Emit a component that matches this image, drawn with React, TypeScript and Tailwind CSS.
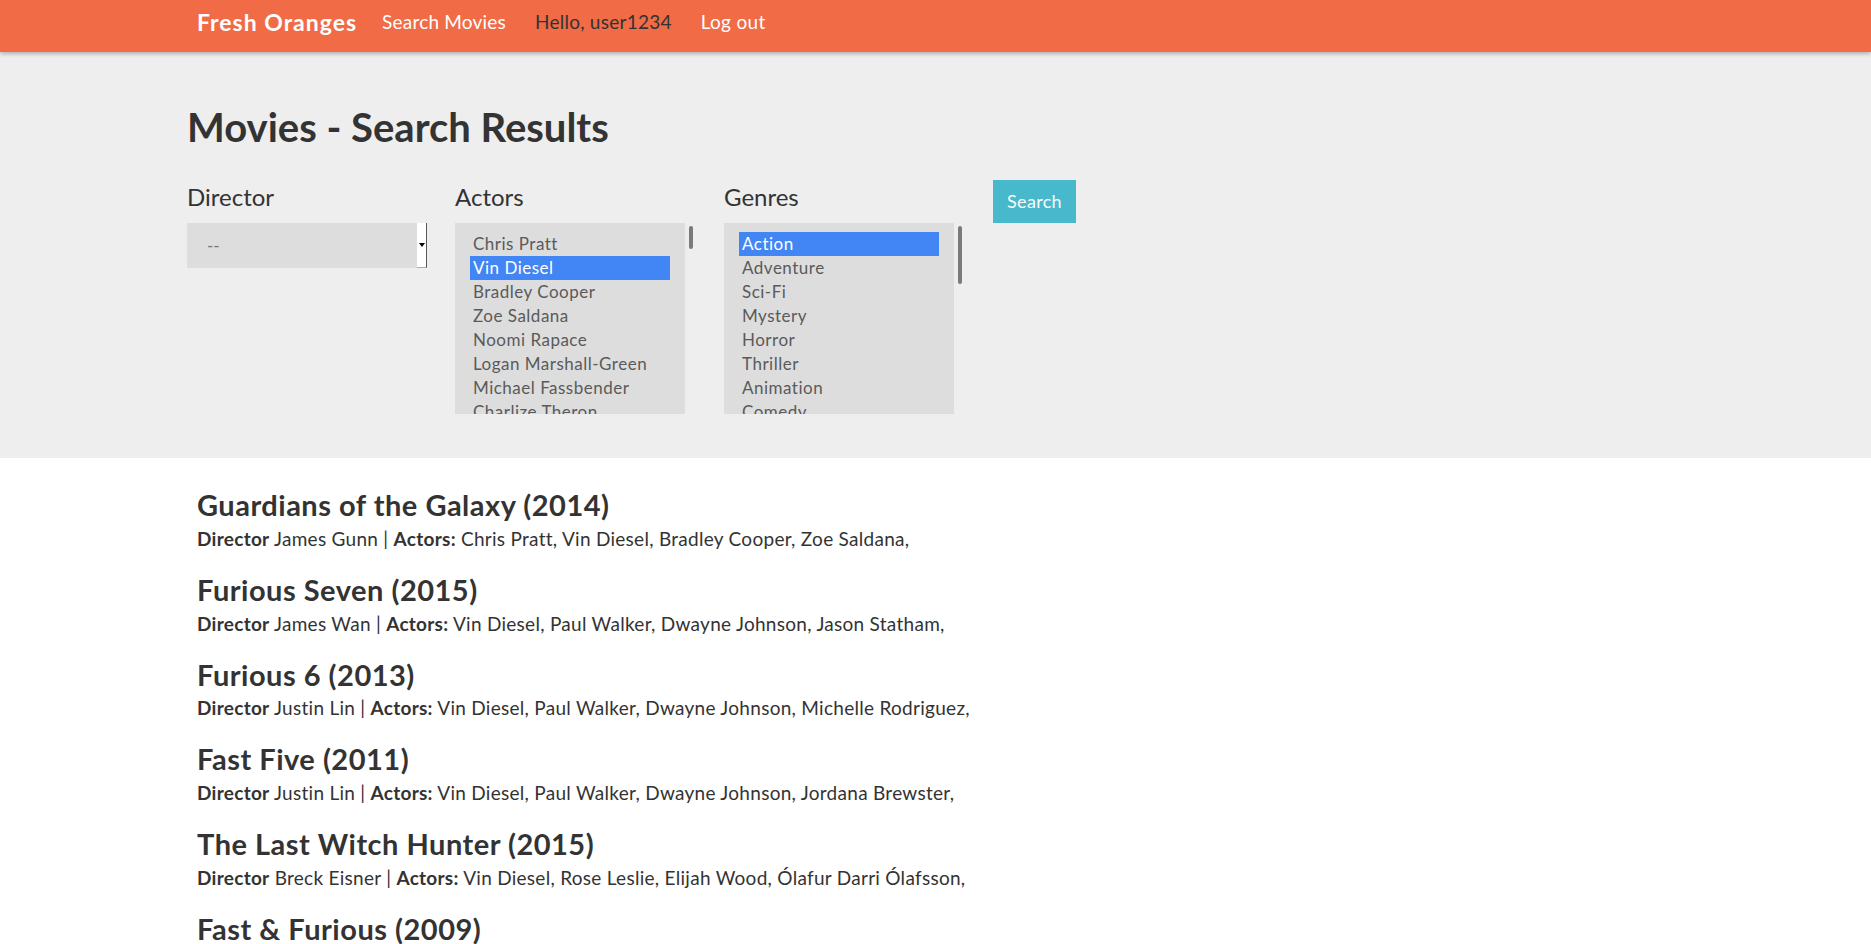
import React from "react";

const actors = [
  "Chris Pratt",
  "Vin Diesel",
  "Bradley Cooper",
  "Zoe Saldana",
  "Noomi Rapace",
  "Logan Marshall-Green",
  "Michael Fassbender",
  "Charlize Theron",
];
const genres = ["Action", "Adventure", "Sci-Fi", "Mystery", "Horror", "Thriller", "Animation", "Comedy"];

const movies = [
  { t: "Guardians of the Galaxy (2014)", d: "James Gunn", a: "Chris Pratt, Vin Diesel, Bradley Cooper, Zoe Saldana," },
  { t: "Furious Seven (2015)", d: "James Wan", a: "Vin Diesel, Paul Walker, Dwayne Johnson, Jason Statham," },
  { t: "Furious 6 (2013)", d: "Justin Lin", a: "Vin Diesel, Paul Walker, Dwayne Johnson, Michelle Rodriguez," },
  { t: "Fast Five (2011)", d: "Justin Lin", a: "Vin Diesel, Paul Walker, Dwayne Johnson, Jordana Brewster," },
  { t: "The Last Witch Hunter (2015)", d: "Breck Eisner", a: "Vin Diesel, Rose Leslie, Elijah Wood, Ólafur Darri Ólafsson," },
  { t: "Fast & Furious (2009)", d: "Justin Lin", a: "Vin Diesel, Paul Walker, Michelle Rodriguez, Jordana Brewster," },
];

function ListBox({ items, selected, thumbH }: { items: string[]; selected: number; thumbH: string }) {
  return (
    <div className="flex h-[191px]">
      <div className="w-[230px] h-full bg-[#dddddd] overflow-hidden pt-[9px] px-[15px]">
        {items.map((it, i) => (
          <div
            key={it}
            className={
              "h-[24px] leading-[24px] text-[17px] tracking-[0.5px] pl-[3px] whitespace-nowrap " +
              (i === selected ? "bg-[#4285f4] text-white" : "text-[#5a5a5a]")
            }
          >
            {it}
          </div>
        ))}
      </div>
      <div className="w-[10px] h-full pt-[3px] pl-[4px]">
        <div className={"w-[4px] rounded-full bg-[#7a7a7a] " + thumbH} />
      </div>
    </div>
  );
}

export default function App() {
  return (
    <div className="min-h-screen bg-white text-[#333333]" style={{ fontFamily: "Lato, 'Open Sans', sans-serif" }}>
      <nav className="h-[52px] bg-[#f06b46] shadow-[0_2px_4px_rgba(0,0,0,0.25)] flex items-center pl-[197px] pb-[7px] relative z-10">
        <span className="text-white font-bold text-[23px] tracking-[1px]">Fresh Oranges</span>
        <span className="text-white text-[19px] tracking-[0.2px] ml-[25px]">Search Movies</span>
        <span className="text-[#333333] text-[19px] tracking-[0.25px] ml-[29px]">Hello, user1234</span>
        <span className="text-white text-[19px] tracking-[0.3px] ml-[29px]">Log out</span>
      </nav>

      <section className="bg-[#eeeeee] h-[406px] pl-[187px] pt-[51px]">
        <h1 className="text-[40px] font-bold leading-[1.2] text-[#333333]">Movies - Search Results</h1>
        <div className="flex items-start mt-[31px]">
          <div className="w-[268px] pt-[1px]">
            <div className="text-[24px] leading-[1.2] text-[#333333]">Director</div>
            <div className="mt-[11px] w-[240px] h-[45px] bg-[#dddddd] flex items-stretch">
              <div className="flex-1 pl-[20px] flex items-center text-[17px] text-[#777777]">--</div>
              <div className="w-[10px] bg-white border-r border-r-[#555555] border-b border-b-[#aaaaaa] flex items-center justify-center">
                <div className="w-0 h-0 border-l-[3px] border-r-[3px] border-t-[4px] border-l-transparent border-r-transparent border-t-black" />
              </div>
            </div>
          </div>
          <div className="w-[269px] pt-[1px]">
            <div className="text-[24px] leading-[1.2] text-[#333333]">Actors</div>
            <div className="mt-[11px]">
              <ListBox items={actors} selected={1} thumbH="h-[23px]" />
            </div>
          </div>
          <div className="w-[269px] pt-[1px]">
            <div className="text-[24px] leading-[1.2] text-[#333333]">Genres</div>
            <div className="mt-[11px]">
              <ListBox items={genres} selected={0} thumbH="h-[58px]" />
            </div>
          </div>
          <button className="w-[83px] h-[43px] bg-[#48b8cc] text-white text-[18px] tracking-[0.3px] -mt-[2px]">Search</button>
        </div>
      </section>

      <main className="pl-[197px] pt-[30px]">
        {movies.map((m) => (
          <div key={m.t} className="mb-[19.5px]">
            <h3 className="text-[29px] tracking-[0.5px] font-bold leading-[1.2] text-[#333333]">{m.t}</h3>
            <p className="mt-[2px] text-[19px] tracking-[0.28px] leading-[1.5] text-[#333333]">
              <b>Director</b> {m.d} | <b>Actors:</b> {m.a}
            </p>
          </div>
        ))}
      </main>
    </div>
  );
}
